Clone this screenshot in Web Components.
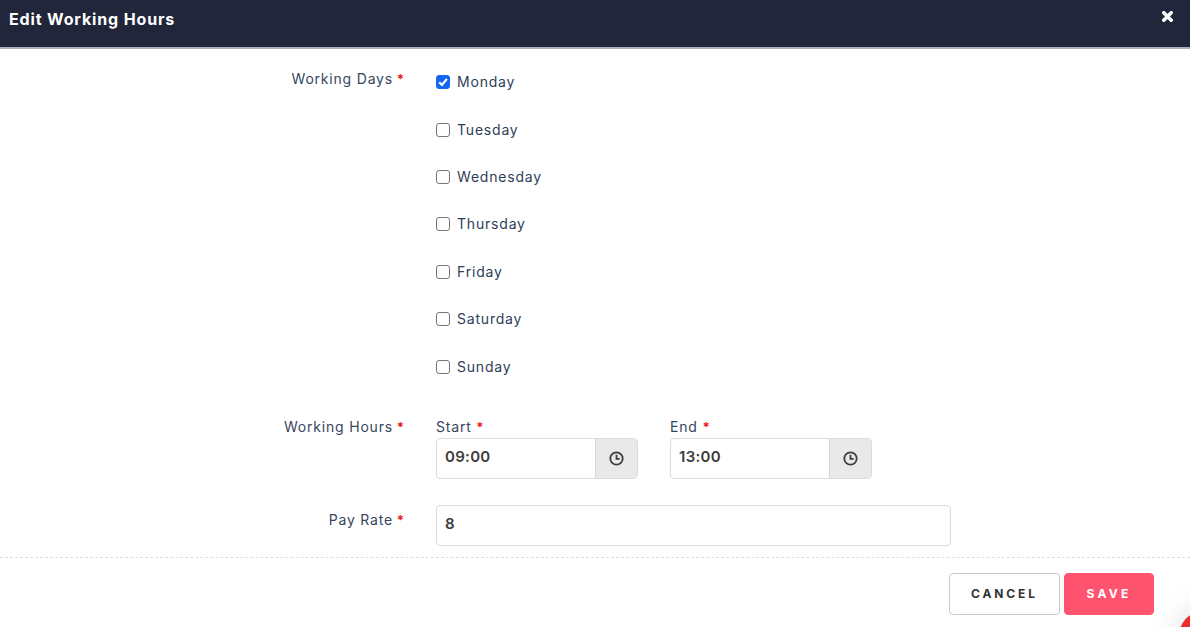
<!DOCTYPE html>
<html>
<head>
<meta charset="utf-8">
<title>Edit Working Hours</title>
<style>
  html, body { margin: 0; height: 100%; background: #fff; }
  body { font-family: "Inter", "Liberation Sans", sans-serif; overflow: hidden; }
</style>
</head>
<body>
<template id="t-dialog">
  <style>
    :host { display: flex; flex-direction: column; width: 1190px; height: 627px; overflow: hidden; position: relative; background: #fff; }
    header { box-sizing: border-box; height: 49px; flex: none; background: #21263a; border-bottom: 2px solid #aeb0b9; color: #fff; display: flex; justify-content: space-between; padding: 10px 17px 0 9px; }
    h1 { margin: 0; font: 700 16px/18px "Inter", sans-serif; letter-spacing: .85px; }
    .x { width: 11px; height: 11px; margin-top: 1px; }
    main { flex: none; height: 509px; box-sizing: border-box; padding-top: 21px; border-bottom: 1px dashed #dedede; }
    footer { flex: none; display: flex; justify-content: flex-end; gap: 4px; padding: 15px 36px 0 0; }
    /* bit of the help bubble that pokes into the corner of the window */
    .corner { position: absolute; right: -39px; bottom: -34px; width: 50px; height: 50px; border-radius: 50%; background: #ee2b2b; box-shadow: 0 0 34px rgba(0,0,0,.14); }
  </style>
  <header>
    <h1><slot name="title"></slot></h1>
    <svg class="x" viewBox="0 0 11 11"><path d="M1.8 1.8 9.2 9.2M9.2 1.8 1.8 9.2" fill="none" stroke="#fff" stroke-width="3.6" stroke-linecap="round"/></svg>
  </header>
  <main><slot></slot></main>
  <footer><slot name="actions"></slot></footer>
  <div class="corner"></div>
</template>

<template id="t-row">
  <style>
    :host { display: grid; grid-template-columns: 404px 1fr; column-gap: 32px; }
    .lab { padding-top: var(--lab-top, 0); text-align: right; font: 400 14px/18px "Inter", sans-serif; letter-spacing: .8px; color: #364660; }
    .lab b { color: #f01818; font-weight: 700; font-size: 13px; letter-spacing: 0; margin-left: -1px; }
  </style>
  <div class="lab"><slot name="label"></slot> <b>*</b></div>
  <div><slot></slot></div>
</template>

<template id="t-check">
  <style>
    :host { display: flex; align-items: center; height: 20px; gap: 7px; font: 400 14px/20px "Inter", sans-serif; letter-spacing: .8px; color: #2f3e58; }
    .box { box-sizing: border-box; width: 14px; height: 14px; border-radius: 3px; border: 1px solid #767676; background: #fff; flex: none; }
    :host([checked]) .box { background: #1266f1; border-color: #1266f1; }
    svg { display: none; width: 12px; height: 12px; }
    :host([checked]) svg { display: block; }
  </style>
  <div class="box"><svg viewBox="0 0 12 12"><path d="M2.2 6.2 4.9 8.9 9.9 3" fill="none" stroke="#fff" stroke-width="2.2"/></svg></div>
  <span><slot></slot></span>
</template>

<template id="t-time">
  <style>
    :host { display: block; width: 202px; }
    .lab { font: 400 14px/18px "Inter", sans-serif; letter-spacing: .8px; color: #364660; height: 20px; }
    .lab b { color: #f01818; font-size: 13px; letter-spacing: 0; }
    .g { box-sizing: border-box; display: flex; height: 41px; border: 1px solid #dcdcdc; border-radius: 4px; overflow: hidden; }
    .v { flex: 1; padding-left: 8px; font: 600 15px/36px "Inter", sans-serif; letter-spacing: .3px; color: #3d3d3d; }
    .b { width: 41px; background: #e9e9e9; border-left: 1px solid #d8d8d8; display: flex; align-items: center; justify-content: center; }
    svg { width: 15px; height: 15px; }
  </style>
  <div class="lab"><slot name="label"></slot> <b>*</b></div>
  <div class="g">
    <div class="v"><slot></slot></div>
    <div class="b"><svg viewBox="0 0 15 15" fill="none" stroke="#3d3d3d" stroke-width="1.8"><circle cx="7.5" cy="7.5" r="6.2"/><path d="M7.5 3.8V7.9H10.7"/></svg></div>
  </div>
</template>

<template id="t-field">
  <style>
    :host { display: block; box-sizing: border-box; width: 515px; height: 41px; border: 1px solid #dcdcdc; border-radius: 4px; padding-left: 8px; font: 600 15px/36px "Inter", sans-serif; letter-spacing: .3px; color: #3d3d3d; }
  </style>
  <slot></slot>
</template>

<template id="t-btn">
  <style>
    :host { box-sizing: border-box; display: flex; align-items: center; justify-content: center; height: 42px; width: 111px; border: 1px solid #c8c8c8; border-radius: 4px; background: #fff; color: #333; font: 700 12px/1 "Inter", sans-serif; letter-spacing: 2.9px; }
    :host([primary]) { width: 90px; background: #ff5470; border-color: #ff5470; color: #fff; letter-spacing: 3.3px; }
  </style>
  <slot></slot>
</template>

<template id="t-stack">
  <style>
    :host { display: flex; flex-direction: column; gap: 27.4px; padding-top: 2.2px; }
  </style>
  <slot></slot>
</template>

<template id="t-pair">
  <style>
    :host { display: flex; gap: 32px; }
  </style>
  <slot></slot>
</template>

<edit-dialog>
  <span slot="title">Edit Working Hours</span>
  <form-row style="height:348px">
    <span slot="label">Working Days</span>
    <day-list>
      <day-check checked>Monday</day-check>
      <day-check>Tuesday</day-check>
      <day-check>Wednesday</day-check>
      <day-check>Thursday</day-check>
      <day-check>Friday</day-check>
      <day-check>Saturday</day-check>
      <day-check>Sunday</day-check>
    </day-list>
  </form-row>
  <form-row style="height:87px">
    <span slot="label">Working Hours</span>
    <time-pair>
      <time-field><span slot="label">Start</span>09:00</time-field>
      <time-field><span slot="label">End</span>13:00</time-field>
    </time-pair>
  </form-row>
  <form-row style="--lab-top:6px">
    <span slot="label">Pay Rate</span>
    <text-field>8</text-field>
  </form-row>
  <action-btn slot="actions">CANCEL</action-btn>
  <action-btn slot="actions" primary>SAVE</action-btn>
</edit-dialog>

<script>
  // every element is the same thing: clone its template into an open shadow root
  const define = (name, id) => {
    customElements.define(name, class extends HTMLElement {
      constructor() {
        super()
        this.attachShadow({ mode: 'open' })
        this.shadowRoot.appendChild(document.getElementById(id).content.cloneNode(true))
      }
    })
  }
  define('edit-dialog', 't-dialog')
  define('form-row', 't-row')
  define('day-list', 't-stack')
  define('day-check', 't-check')
  define('time-pair', 't-pair')
  define('time-field', 't-time')
  define('text-field', 't-field')
  define('action-btn', 't-btn')
</script>
</body>
</html>
